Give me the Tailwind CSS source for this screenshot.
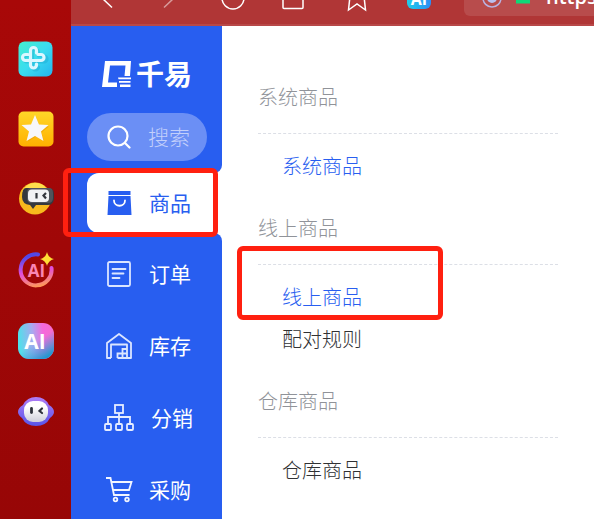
<!DOCTYPE html>
<html lang="zh-CN">

<head>
    <meta charset="UTF-8">
    <meta name="viewport" content="width=device-width, initial-scale=1.0">
    <script src="https://cdn.jsdelivr.net/npm/@tailwindcss/browser@4"></script>
    <title>千易</title>
</head>

<body class="relative flex h-screen overflow-hidden bg-white font-['Noto_Sans','Noto_Sans_CJK_SC',sans-serif]">
    <!-- browser side bar -->
    <aside class="w-[71px] shrink-0 bg-linear-to-b from-[#a80808] to-[#970606] pt-[41px]">
        <div class="flex h-[388px] flex-col items-center justify-between">
            <button aria-label="助手">
                <svg class="size-9" viewBox="0 0 36 36">
                    <defs>
                        <linearGradient id="teal" x1="0" y1="0" x2="1" y2="1">
                            <stop offset="0" stop-color="#44f0cf" />
                            <stop offset=".5" stop-color="#3bdcf0" />
                            <stop offset="1" stop-color="#25b5ee" />
                        </linearGradient>
                    </defs>
                    <rect x=".5" y=".5" width="34" height="35" rx="6" fill="url(#teal)" />
                    <g fill="none" stroke-width="3.200" stroke-linecap="round">
                        <path d="M19.500 14V10.500a3 3 0 0 0-6 0V25a3 3 0 0 0 6 0M11 14H8a3 3 0 0 0 0 6h17a3 3 0 0 0 0-6h-3" stroke="#1ba6cc" opacity=".4" transform="translate(1 1)" />
                        <path d="M18.500 12V9.500a3 3 0 0 0-6 0V24a3 3 0 0 0 6 0v-1M10 13.500H7.500a3 3 0 0 0 0 6H23a3 3 0 0 0 0-6h-3" stroke="#dcf7ff" />
                    </g>
                </svg>
            </button>
            <button aria-label="收藏">
                <svg class="size-9" viewBox="0 0 36 36">
                    <defs>
                        <linearGradient id="gold" x1="0" y1="0" x2="0" y2="1">
                            <stop offset="0" stop-color="#ffd728" />
                            <stop offset="1" stop-color="#ffb000" />
                        </linearGradient>
                    </defs>
                    <rect x=".5" y=".5" width="35" height="35" rx="5" fill="url(#gold)" />
                    <path d="M18 6l3.500 9 9.500.5-7.500 6 2.500 9-8-5-8 5 2.500-9-7.500-6 9.500-.5z" fill="#e79900" opacity=".5" />
                    <path d="M17 4l4 9.500 9.500.5-7.500 6.500 2.500 9.500-8.500-5-8.500 5L11 20.500 3.500 14l9.500-.5z" fill="#f7f7f9" />
                </svg>
            </button>
            <button aria-label="机器人">
                <svg class="size-9" viewBox="0 0 36 36">
                    <circle cx="17" cy="16.500" r="16" fill="#f8b91d" />
                    <path d="M4 10a14 14 0 0 1 26-1z" fill="#ffdf4d" />
                    <path d="M8 6h23q5 0 5 6v5q-1 6-6 6H18l-3 4-3-4q-8-1-8-8 0-9 4-9z" fill="#35383e" />
                    <path d="M12 6h19q4 0 4 5v5q0 5-5 5H13q-4 0-4-5v-4q0-6 3-6z" fill="#50545b" />
                    <rect x="10" y="7.500" width="21" height="12.500" rx="4" fill="#f1f2f4" />
                    <path d="M18.500 11v5.500M28 11l-2.500 2.500 2.500 3" stroke="#33363c" stroke-width="2.200" fill="none" />
                </svg>
            </button>
            <button aria-label="AI 创作">
                <svg class="size-9" viewBox="0 0 36 36">
                    <defs>
                        <linearGradient id="ring" x1=".6" y1="0" x2=".8" y2="1">
                            <stop offset="0" stop-color="#5147e8" />
                            <stop offset=".5" stop-color="#e34fdc" />
                            <stop offset="1" stop-color="#ff9a55" />
                        </linearGradient>
                    </defs>
                    <path d="M20 2.500A15.500 15.500 0 1 0 33.500 16" fill="none" stroke="url(#ring)" stroke-width="4" stroke-linecap="round" />
                    <path d="M29 0q1.500 6 7 7-5.500 1.500-7 7-1.500-5.500-7-7 5.500-1 7-7z" fill="#ffdf35" />
                    <text x="18.500" y="24.500" text-anchor="middle" font-family="Open Sans, sans-serif" font-size="17" font-weight="700" fill="#fa86b4">AI</text>
                </svg>
            </button>
            <button aria-label="AI 工具">
                <svg class="size-9" viewBox="0 0 36 36">
                    <defs>
                        <linearGradient id="mix" x1="0" y1=".3" x2="1" y2=".2">
                            <stop offset="0" stop-color="#4ee1ea" />
                            <stop offset=".4" stop-color="#a9a8ef" />
                            <stop offset=".7" stop-color="#f668dc" />
                            <stop offset="1" stop-color="#f36dcc" />
                        </linearGradient>
                        <linearGradient id="mixfade" x1=".3" y1=".4" x2=".7" y2="1">
                            <stop offset=".3" stop-color="#2aa9dc" stop-opacity="0" />
                            <stop offset="1" stop-color="#2299cf" />
                        </linearGradient>
                    </defs>
                    <rect width="36" height="36" rx="11" fill="url(#mix)" />
                    <rect width="36" height="36" rx="11" fill="url(#mixfade)" />
                    <text x="17" y="26" text-anchor="middle" font-family="Open Sans, sans-serif" font-size="21" font-weight="700" fill="#fff">AI</text>
                </svg>
            </button>
            <button aria-label="聊天">
                <svg class="size-9" viewBox="0 0 36 36">
                    <defs>
                        <linearGradient id="hood" x1="0" y1="0" x2="0" y2="1">
                            <stop offset="0" stop-color="#b07cf5" />
                            <stop offset="1" stop-color="#5754e8" />
                        </linearGradient>
                        <linearGradient id="face" x1="0" y1="0" x2="0" y2="1">
                            <stop offset=".3" stop-color="#fff" />
                            <stop offset="1" stop-color="#cfcfda" />
                        </linearGradient>
                    </defs>
                    <path d="M18 4q9 0 13 8 5 3 5 7 0 3-4 6-4 8-14 8T4 25q-4-3-4-6 0-4 5-7 4-8 13-8z" fill="url(#hood)" />
                    <rect x="6" y="8" width="24" height="21" rx="9" fill="url(#face)" />
                    <path d="M13.500 15.500v4" stroke="#2f323c" stroke-width="2.800" stroke-linecap="round" />
                    <path d="M24 15.500l-2.500 2.500 2.500 2" stroke="#2f323c" stroke-width="2.200" fill="none" stroke-linecap="round" />
                </svg>
            </button>
        </div>
    </aside>

    <div class="flex min-w-0 flex-1 flex-col">
        <!-- browser tool bar -->
        <header class="relative h-[26px] shrink-0 overflow-hidden border-b-2 border-[#b84848] bg-[#b03636] text-white">
            <svg class="absolute left-0 top-0 h-6 w-[380px]" viewBox="0 0 380 24" fill="none" stroke="currentColor" stroke-width="1.500">
                <path d="M31-2l10 9.500" />
                <path d="M103-2L93 7.500" opacity=".5" />
                <circle cx="162" cy="-2" r="11" />
                <path d="M212-4V7.500q0 1 1 1h18q1 0 1-1V-4" />
                <path d="M279-4l-1.500 14 8.500-6 8.500 6L293-4" />
            </svg>
            <div class="absolute -top-4 left-[336px] h-[25px] w-6 rounded-md bg-linear-to-r from-[#20cde8] to-[#2e8cf5] text-center font-['Open_Sans'] text-base leading-[30px] font-bold">AI</div>
            <div class="absolute -top-4 right-0 left-[393px] h-8 rounded-l-md bg-[#b84c4c]">
                <svg class="absolute top-4 left-[18px] h-4 w-14" viewBox="0 0 56 16">
                    <circle cx="10" cy="-2" r="9" fill="none" stroke="#b9b2e2" stroke-width="1.500" />
                    <circle cx="10" cy="-2" r="5" fill="#b9bfee" />
                    <rect x="34" y="-6" width="14" height="9.500" fill="#10d878" />
                </svg>
                <span class="absolute top-0 left-[82px] font-['Open_Sans'] text-xl leading-[25px] font-semibold">https</span>
            </div>
        </header>

        <div class="flex min-h-0 flex-1">
            <nav class="flex w-[151px] shrink-0 flex-col overflow-hidden text-[21px] leading-8 text-white">
                <div class="rounded-br-lg bg-[#285ef0] pb-3">
                    <a href="#" class="flex h-[87px] items-center gap-1 pt-2 pl-[31px]">
                        <svg class="h-7 w-[30px]" viewBox="0 0 30 28" fill="#fff">
                            <path d="M3 1h26l-1 15h-5.500l1-10.500H8L6 22.500h9V27H0z" />
                            <path d="M16 17.500h13v1.800H16.500zM17 21h11.500v1.800H17zM18 24.500h10.500V27H18z" />
                        </svg>
                        <span class="text-[28px] leading-8 font-bold">千易</span>
                    </a>
                    <label class="mx-4 flex h-12 w-30 items-center gap-[17px] rounded-full bg-[#6b8ff5] pl-5">
                        <svg class="size-6 shrink-0" viewBox="0 0 24 24" fill="none" stroke="#fff" stroke-width="2.200" stroke-linecap="round">
                            <circle cx="11" cy="11" r="9.500" />
                            <path d="M18 18l4.500 4.500" />
                        </svg>
                        <input type="text" aria-label="搜索" placeholder="搜索" class="w-12 bg-transparent font-light placeholder:text-[#c3d0fb]">
                    </label>
                </div>
                <div class="bg-[#285ef0] pl-4">
                    <a href="#" class="flex h-[60px] items-center gap-4 rounded-l-xl bg-white pl-5 text-[#285ef0]">
                        <svg class="size-6.5" viewBox="0 0 26 26">
                            <path d="M1.500 1h22v4h-22zM1.500 6h22l1 19H.5z" fill="#285ef0" />
                            <path d="M7 10.500c0 7 11 7 11 0" fill="none" stroke="#fff" stroke-width="1.800" stroke-linecap="round" />
                        </svg>
                        商品
                    </a>
                </div>
                <div class="min-h-0 flex-1 rounded-tr-lg bg-[#285ef0] pt-[5px] pl-8">
                    <a href="#" class="flex h-18 items-center gap-3.5">
                        <svg class="size-8" viewBox="0 0 32 32" fill="none" stroke="#dbe5ff" stroke-width="1.800">
                            <rect x="5" y="4" width="22" height="24" rx="1.500" />
                            <path d="M9.500 11h13M9.500 15.500h11M9.500 20h7" stroke-linecap="round" />
                        </svg>
                        订单
                    </a>
                    <a href="#" class="flex h-18 items-center gap-3.5">
                        <svg class="size-8" viewBox="0 0 32 32" fill="none" stroke="#dbe5ff" stroke-width="1.800">
                            <path d="M8 28H4V13L16 4l12 9v15h-4M8 28V14.500h16V28" stroke-linejoin="round" />
                            <path d="M14.500 28v-4.500H24M19.500 28v-9H24M14.500 28H24" />
                        </svg>
                        库存
                    </a>
                    <a href="#" class="flex h-18 items-center gap-4">
                        <svg class="size-8" viewBox="0 0 32 32" fill="none" stroke="#e6edff" stroke-width="1.800">
                            <rect x="12" y="3" width="8" height="8" />
                            <path d="M16 11v11M5 22v-7h22v7" />
                            <rect x="2" y="22" width="6" height="6" rx="1" />
                            <rect x="13" y="22" width="6" height="6" rx="1" />
                            <rect x="24" y="22" width="6" height="6" rx="1" />
                        </svg>
                        分销
                    </a>
                    <a href="#" class="flex h-18 items-center gap-3.5">
                        <svg class="size-8" viewBox="0 0 32 32" fill="none" stroke="#f2f5ff" stroke-width="1.800">
                            <path d="M3 4h4.500L11 21h15.500M8.500 8h20L26 16H10" />
                            <circle cx="12.500" cy="25.500" r="1.800" />
                            <circle cx="24" cy="25.500" r="1.800" />
                        </svg>
                        采购
                    </a>
                </div>
            </nav>

            <!-- sub menu -->
            <main class="min-w-0 flex-1 pt-[57px] pr-9 pl-9 text-xl leading-[30px] font-light text-[#303133]">
                <section>
                    <h2 class="border-b border-dashed border-[#dcdfe6] pb-5 font-light text-[#909399]">系统商品</h2>
                    <ul class="flex flex-col gap-3 pt-[18px] pl-6">
                        <li><a href="#" class="block text-[#285ef0]">系统商品</a></li>
                    </ul>
                </section>
                <section class="pt-8">
                    <h2 class="border-b border-dashed border-[#dcdfe6] pb-5 font-light text-[#909399]">线上商品</h2>
                    <ul class="flex flex-col gap-3 pt-[18px] pl-6">
                        <li><a href="#" class="block text-[#285ef0]">线上商品</a></li>
                        <li><a href="#" class="block">配对规则</a></li>
                    </ul>
                </section>
                <section class="pt-8">
                    <h2 class="border-b border-dashed border-[#dcdfe6] pb-5 font-light text-[#909399]">仓库商品</h2>
                    <ul class="flex flex-col gap-3 pt-[18px] pl-6">
                        <li><a href="#" class="block">仓库商品</a></li>
                    </ul>
                </section>
            </main>
        </div>
    </div>

    <!-- highlight boxes over the menus -->
    <div class="pointer-events-none absolute top-[168px] left-[63px] h-[69px] w-[155px] rounded-md border-5 border-[#ff2010]"></div>
    <div class="pointer-events-none absolute top-[246px] left-[237px] h-[74px] w-[206px] rounded-md border-5 border-[#ff2010]"></div>
</body>

</html>
